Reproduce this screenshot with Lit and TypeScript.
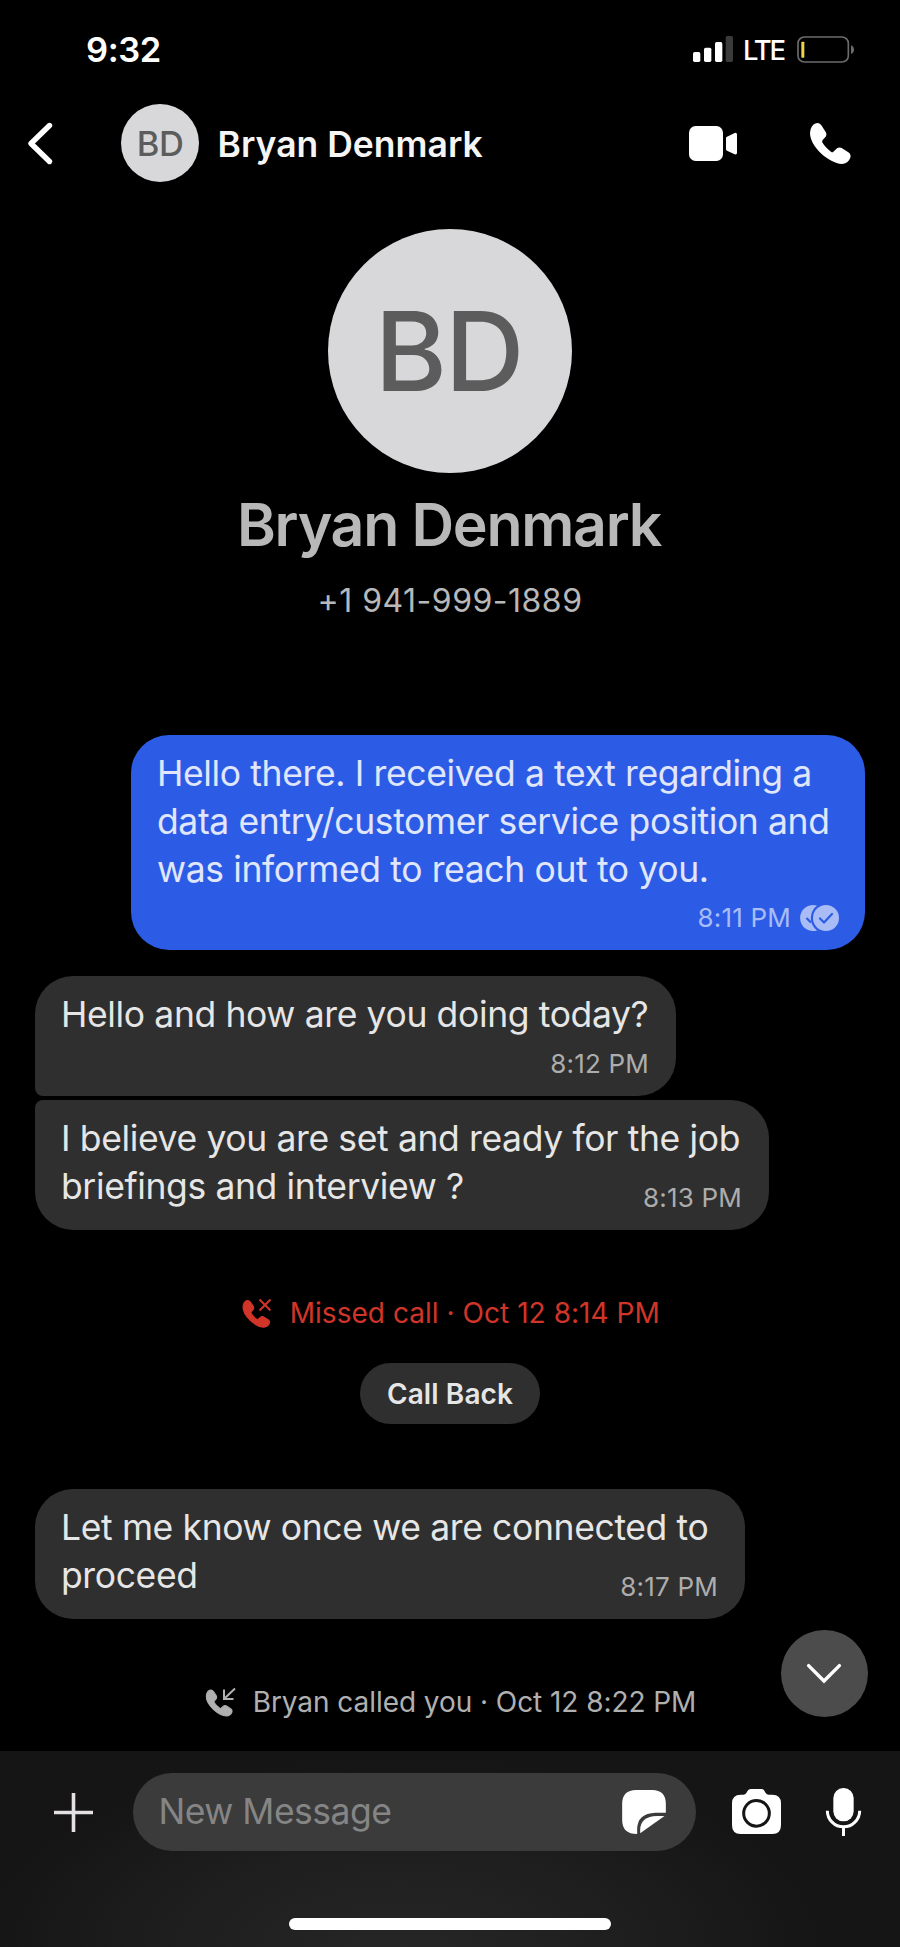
import { LitElement, html, css, svg, nothing } from "lit";
import { customElement } from "lit/decorators.js";
import { classMap } from "lit/directives/class-map.js";
import { styleMap } from "lit/directives/style-map.js";

interface Message {
  lines: string[];
  time: string;
  width: number;
  sent?: boolean;
  inlineTime?: boolean;
  joinsNext?: boolean;
  joinsPrevious?: boolean;
}

const sent: Message = {
  lines: [
    "Hello there. I received a text regarding a",
    "data entry/customer service position and",
    "was informed to reach out to you.",
  ],
  time: "8:11 PM",
  width: 734,
  sent: true,
};
const greeting: Message = {
  lines: ["Hello and how are you doing today?"],
  time: "8:12 PM",
  width: 641,
  joinsNext: true,
};
const briefing: Message = {
  lines: ["I believe you are set and ready for the job", "briefings and interview ?"],
  time: "8:13 PM",
  width: 734,
  inlineTime: true,
  joinsPrevious: true,
};
const proceed: Message = {
  lines: ["Let me know once we are connected to", "proceed"],
  time: "8:17 PM",
  width: 710,
  inlineTime: true,
};

const handset = svg`<path d="M2 18C6 6 14 0 22 0C28 0 31 3 34 7L47 27C50 32 50 36 47 41L38 51C36 54 36 57 38 60C45 71 53 79 63 86C66 88 68 88 70 86L81 76C85 73 90 72 95 75L115 88C121 92 123 98 121 104C117 115 108 122 95 123C58 121 0 72 0 30Z"/>`;

@customElement("app-root")
export class AppRoot extends LitElement {
  static styles = css`
    :host {
      display: flex;
      flex-direction: column;
      position: relative;
      box-sizing: border-box;
      width: 900px;
      height: 1947px;
      overflow: hidden;
      background: #000;
      color: #fff;
      font-family: Inter, "Liberation Sans", sans-serif;
      white-space: nowrap;
    }
    svg { display: block; flex: none; overflow: visible; }
    .status {
      display: flex;
      align-items: center;
      height: 98px;
      padding: 0 45px 0 86px;
    }
    .clock { font-size: 34.5px; font-weight: 600; letter-spacing: -0.4px; flex: 1; }
    .lte { font-size: 27.5px; letter-spacing: -2.2px; font-weight: 500; margin: 1px 13px 0 10px; }
    .header {
      display: flex;
      align-items: center;
      height: 90px;
      padding: 0 49px 0 28px;
    }
    .avatar {
      display: flex;
      align-items: center;
      justify-content: center;
      flex: none;
      border-radius: 50%;
      background: #d8d8da;
      color: #5c5c5c;
      font-weight: 500;
    }
    .avatar.small { width: 78px; height: 78px; margin-left: 69px; font-size: 34.5px; letter-spacing: -0.5px; }
    .avatar.large { box-sizing: border-box; width: 244px; height: 244px; padding-right: 3px; font-size: 110px; letter-spacing: -2px; }
    .title { margin: 2px 0 0 18.5px; font-size: 35.5px; font-weight: 600; flex: 1; color: #f5f5f5; }
    .video { margin-right: 73px; }
    .profile {
      box-sizing: border-box;
      display: flex;
      flex-direction: column;
      align-items: center;
      padding-top: 41px;
      height: 547px;
      color: #b8b8b8;
    }
    .name { font-size: 59px; line-height: 70px; font-weight: 600; letter-spacing: -1.3px; margin-top: 17px; padding-right: 2px; }
    .number { font-size: 32px; line-height: 40px; letter-spacing: 0.5px; margin-top: 21px; }
    .thread { display: flex; flex-direction: column; padding: 0 35px; align-items: flex-start; }
    .bubble {
      box-sizing: border-box;
      display: flex;
      flex-direction: column;
      align-items: flex-start;
      padding: 15px 27px 17px 26px;
      border-radius: 38px;
      background: #2f2f2f;
      color: #e6e6e6;
    }
    .bubble.sent {
      align-self: flex-end;
      background: #2c5ce6;
      color: #e0e6fb;
      margin-bottom: 26px;
      padding-right: 26px;
    }
    .bubble.joins-next { border-bottom-left-radius: 8px; margin-bottom: 4px; }
    .bubble.joins-previous { border-top-left-radius: 8px; }
    .line { font-size: 35.5px; line-height: 48px; letter-spacing: -0.37px; }
    .meta {
      display: flex;
      align-items: center;
      gap: 9px;
      align-self: flex-end;
      margin-top: 10px;
      height: 30px;
      font-size: 26px;
      line-height: 30px;
      letter-spacing: 0.2px;
      color: #adadad;
    }
    .inline-time .meta { margin-top: -28px; }
    .sent .meta { margin-top: 9px; color: #a9bcf5; }
    .event {
      align-self: center;
      display: flex;
      align-items: center;
      height: 40px;
      font-size: 28px;
      line-height: 40px;
      color: #b0b0b0;
      fill: currentColor;
      stroke: currentColor;
    }
    .event span { stroke: none; }
    .missed { color: #d13528; margin-top: 63px; padding-left: 3px; gap: 18.5px; letter-spacing: 0.04px; }
    .incoming { margin-top: 63px; padding-left: 2px; gap: 18px; letter-spacing: -0.06px; }
    .callback {
      align-self: center;
      display: flex;
      align-items: center;
      justify-content: center;
      width: 180px;
      height: 61px;
      margin: 30px 0 65px;
      border-radius: 31px;
      background: #2f2f2f;
      color: #e6e6e6;
      font-size: 28px;
      font-weight: 600;
      letter-spacing: 0.1px;
    }
    .jump {
      position: absolute;
      left: 780.5px;
      top: 1630px;
      width: 87px;
      height: 87px;
      border-radius: 50%;
      background: #4c4c4c;
      display: flex;
      align-items: center;
      justify-content: center;
    }
    .composer {
      display: flex;
      flex-direction: column;
      align-items: center;
      margin-top: auto;
      height: 196px;
      background: radial-gradient(ellipse 420px 190px at 400px 100%, #262626, #1e1e1e 55%, #151515);
    }
    .tools {
      box-sizing: border-box;
      width: 100%;
      display: flex;
      align-items: center;
      height: 78px;
      margin: 22px 0 67px;
      padding: 0 38px 0 54px;
    }
    .field {
      box-sizing: border-box;
      display: flex;
      align-items: center;
      justify-content: space-between;
      width: 563px;
      height: 78px;
      margin: 0 36.5px 0 39.5px;
      padding: 0 30px 0 26px;
      border-radius: 39px;
      background: #3b3b3b;
      color: #858585;
      font-size: 35.5px;
      letter-spacing: -0.5px;
    }
    .placeholder { margin-top: -2px; }
    .camera { margin-top: -2px; }
    .mic { margin-left: 45px; }
    .home { width: 322px; height: 12px; border-radius: 6px; background: #fff; }
  `;

  private bubble(m: Message) {
    const classes = {
      bubble: true,
      sent: !!m.sent,
      "inline-time": !!m.inlineTime,
      "joins-next": !!m.joinsNext,
      "joins-previous": !!m.joinsPrevious,
    };
    return html`
      <div class=${classMap(classes)} style=${styleMap({ width: `${m.width}px` })}>
        ${m.lines.map((line) => html`<span class="line">${line}</span>`)}
        <span class="meta"><span>${m.time}</span>${m.sent ? this.readReceipt() : nothing}</span>
      </div>
    `;
  }

  private readReceipt() {
    return html`
      <svg width="39" height="26" viewBox="0 0 39 26">
        <path fill="#a9bcf5" d="M17 .6A13 13 0 1 0 17 25.4A15.5 15.5 0 0 1 17 .6Z"/>
        <path fill="none" stroke="#2c5ce6" stroke-width="2.2" d="M6.500 13L11 17.500"/>
        <circle cx="26" cy="13" r="13" fill="#a9bcf5"/>
        <path fill="none" stroke="#2c5ce6" stroke-width="2.2" stroke-linecap="round" stroke-linejoin="round" d="M20 13.5L24 17.5L32 9"/>
      </svg>
    `;
  }

  render() {
    return html`
      <div class="status">
        <div class="clock">9:32</div>
        <svg class="signal" width="40" height="26" viewBox="0 0 120 78">
          <g fill="#fff">
            <rect x="0" y="48" width="22" height="30" rx="5"/>
            <rect x="33" y="35" width="22" height="43" rx="5"/>
            <rect x="66" y="18" width="22" height="60" rx="5"/>
          </g>
          <rect x="98" y="0" width="22" height="78" rx="5" fill="#3a3a3a"/>
        </svg>
        <span class="lte">LTE</span>
        <svg class="battery" width="58" height="27" viewBox="0 0 174 81">
          <rect x="3" y="3" width="151" height="75" rx="19" fill="none" stroke="#6b6b6b" stroke-width="5"/>
          <rect x="13" y="17" width="9" height="48" rx="2" fill="#f2d14f"/>
          <path d="M162 28Q171 32 171 41Q171 50 162 54Z" fill="#6b6b6b"/>
        </svg>
      </div>

      <div class="header">
        <svg width="24" height="41" viewBox="0 0 24 41" fill="none" stroke="#fff" stroke-width="5.4" stroke-linecap="round" stroke-linejoin="round">
          <path d="M21.5 2.5L3 20.5L21.5 38.5"/>
        </svg>
        <div class="avatar small">BD</div>
        <div class="title">Bryan Denmark</div>
        <svg class="video" width="48" height="35" viewBox="0 0 144 105" fill="#fff">
          <rect width="102" height="105" rx="20"/>
          <path d="M111 36Q111 33 114 32L137 21Q144 19 144 26V80Q144 87 137 85L114 74Q111 73 111 70Z"/>
        </svg>
        <svg width="41" height="41" viewBox="0 0 123 123" fill="#fff">${handset}</svg>
      </div>

      <div class="profile">
        <div class="avatar large">BD</div>
        <div class="name">Bryan Denmark</div>
        <div class="number">+1 941-999-1889</div>
      </div>

      <div class="thread">
        ${this.bubble(sent)} ${this.bubble(greeting)} ${this.bubble(briefing)}
        <div class="event missed">
          <svg width="28" height="28" viewBox="0 0 28 28">
            <g transform="translate(0 1.5) scale(.218)" stroke-width="5">${handset}</g>
            <path d="M16.5 .5L27.5 11.5M27.5 .5L16.5 11.5" stroke-width="2"/>
          </svg>
          <span>Missed call · Oct 12 8:14 PM</span>
        </div>
        <div class="callback"><span>Call Back</span></div>
        ${this.bubble(proceed)}
        <div class="event incoming">
          <svg width="29" height="28" viewBox="0 0 29 28">
            <g transform="translate(0.3 2) scale(.212)" stroke-width="5">${handset}</g>
            <path d="M29 .5L18 11M18 1.5V11H27.5" fill="none" stroke-width="2"/>
          </svg>
          <span>Bryan called you · Oct 12 8:22 PM</span>
        </div>
      </div>

      <div class="jump">
        <svg width="34" height="19" viewBox="0 0 34 19" fill="none" stroke="#fff" stroke-width="3.4" stroke-linecap="round">
          <path d="M1.6 1.6L17 17L32.4 1.6"/>
        </svg>
      </div>

      <div class="composer">
        <div class="tools">
          <svg width="39" height="39" viewBox="0 0 39 39" stroke="#e4e0e3" stroke-width="3.6">
            <path d="M0 19.5H39M19.5 0V39"/>
          </svg>
          <div class="field">
            <span class="placeholder">New Message</span>
            <svg width="44" height="44" viewBox="0 0 131 132" fill="#fff">
              <path d="M42 0H90Q131 0 131 42V68H100Q45 70 45 118V132Q0 132 0 90V42Q0 0 42 0Z"/>
              <path d="M127 78H105Q54 80 54 120V130Z"/>
            </svg>
          </div>
          <svg class="camera" width="49" height="45" viewBox="0 0 147 135">
            <path fill="#fff" d="M26 17H34Q40 17 43 12L47 5Q50 0 56 0H88Q94 0 97 5L101 12Q104 17 110 17H121Q147 17 147 43V109Q147 135 121 135H26Q0 135 0 109V43Q0 17 26 17Z"/>
            <circle cx="73.500" cy="73" r="38.500" fill="none" stroke="#151515" stroke-width="9"/>
          </svg>
          <svg class="mic" width="35" height="48" viewBox="0 0 105 144">
            <rect x="22" y="0" width="61" height="100" rx="30" fill="#fff"/>
            <path d="M4 68A48.500 48.500 0 0 0 101 68M52.500 117V144" fill="none" stroke="#fff" stroke-width="9"/>
          </svg>
        </div>
        <div class="home"></div>
      </div>
    `;
  }
}
